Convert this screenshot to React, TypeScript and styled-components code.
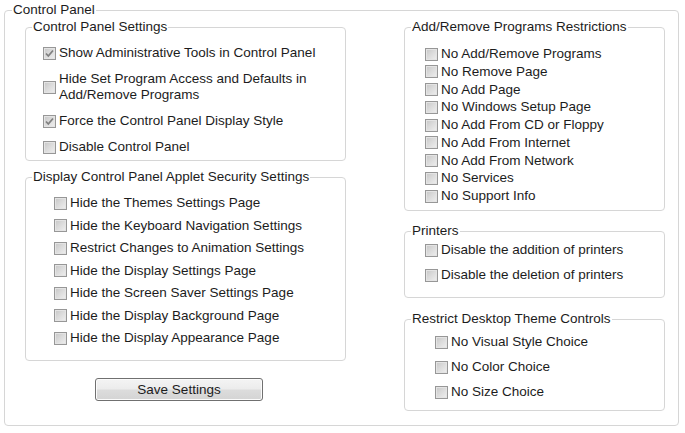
import React from "react";
import styled, { createGlobalStyle } from "styled-components";

const Global = createGlobalStyle`
  html, body { margin: 0; padding: 0; background: #ffffff; }
  body {
    font-family: "Liberation Sans", Arial, sans-serif;
    font-size: 13.5px;
    color: #1c1c1c;
  }
`;

const Outer = styled.fieldset`
  box-sizing: border-box;
  margin: 2px 0 0 4px;
  width: 675px;
  padding: 1px 13px 14px 7px;
  border: 1px solid #d6d6d6;
  border-radius: 4px;
  min-width: 0;
`;

const Legend = styled.legend`
  padding: 0 1px;
  line-height: 16px;
  font-size: 13.5px;
  color: #1c1c1c;
`;

const Columns = styled.div`
  display: flex;
  justify-content: space-between;
  margin-left: 13px;
`;

const Column = styled.div<{ $w: number }>`
  display: flex;
  flex-direction: column;
  width: ${(p) => p.$w}px;
`;

const Group = styled.fieldset<{ $pt: number; $pb: number; $mt?: number }>`
  box-sizing: border-box;
  margin: ${(p) => p.$mt ?? 0}px 0 0 0;
  padding: ${(p) => p.$pt}px 6px ${(p) => p.$pb}px 6px;
  border: 1px solid #d6d6d6;
  border-radius: 4px;
  min-width: 0;
`;

const List = styled.div<{ $indent: number; $gap: number }>`
  display: flex;
  flex-direction: column;
  gap: ${(p) => p.$gap}px;
  padding-left: ${(p) => p.$indent}px;
`;

const Row = styled.label`
  display: flex;
  align-items: center;
  gap: 3px;
  line-height: 16px;
  white-space: nowrap;
  cursor: default;
`;

const Box = styled.span`
  box-sizing: border-box;
  flex: none;
  width: 13px;
  height: 13px;
  border: 1px solid #979797;
  background: linear-gradient(135deg, #c6c6c6 0%, #dadada 45%, #efefef 100%);
  box-shadow: inset 0 0 0 1px #e4e4e4;
  display: flex;
  align-items: center;
  justify-content: center;
`;

const Button = styled.button`
  box-sizing: border-box;
  margin: 17px 0 0 70px;
  width: 168px;
  height: 23px;
  border: 1px solid #707070;
  border-radius: 3px;
  background: linear-gradient(to bottom, #f4f4f4 0%, #ececec 48%, #dcdcdc 52%, #d4d4d4 100%);
  box-shadow: inset 0 0 0 1px #fbfbfb;
  font-family: "Liberation Sans", Arial, sans-serif;
  font-size: 13.5px;
  color: #1c1c1c;
  padding: 0;
`;

const Check = ({ checked, children }: { checked?: boolean; children: React.ReactNode }) => (
  <Row>
    <Box>
      {checked && (
        <svg width="9" height="9" viewBox="0 0 9 9">
          <path d="M1 4.5 L3.3 7 L8 1.5" stroke="#808080" strokeWidth="1.8" fill="none" />
        </svg>
      )}
    </Box>
    <span>{children}</span>
  </Row>
);

export default function App() {
  return (
    <>
      <Global />
      <Outer>
        <Legend>Control Panel</Legend>
        <Columns>
          <Column $w={321}>
            <Group $pt={10} $pb={5}>
              <Legend>Control Panel Settings</Legend>
              <List $indent={11} $gap={10}>
                <Check checked>Show Administrative Tools in Control Panel</Check>
                <Check>
                  Hide Set Program Access and Defaults in
                  <br />
                  Add/Remove Programs
                </Check>
                <Check checked>Force the Control Panel Display Style</Check>
                <Check>Disable Control Panel</Check>
              </List>
            </Group>
            <Group $pt={10} $pb={14} $mt={8}>
              <Legend>Display Control Panel Applet Security Settings</Legend>
              <List $indent={22} $gap={6.5}>
                <Check>Hide the Themes Settings Page</Check>
                <Check>Hide the Keyboard Navigation Settings</Check>
                <Check>Restrict Changes to Animation Settings</Check>
                <Check>Hide the Display Settings Page</Check>
                <Check>Hide the Screen Saver Settings Page</Check>
                <Check>Hide the Display Background Page</Check>
                <Check>Hide the Display Appearance Page</Check>
              </List>
            </Group>
            <Button>Save Settings</Button>
          </Column>
          <Column $w={261}>
            <Group $pt={11} $pb={6}>
              <Legend>Add/Remove Programs Restrictions</Legend>
              <List $indent={14} $gap={1.75}>
                <Check>No Add/Remove Programs</Check>
                <Check>No Remove Page</Check>
                <Check>No Add Page</Check>
                <Check>No Windows Setup Page</Check>
                <Check>No Add From CD or Floppy</Check>
                <Check>No Add From Internet</Check>
                <Check>No Add From Network</Check>
                <Check>No Services</Check>
                <Check>No Support Info</Check>
              </List>
            </Group>
            <Group $pt={3} $pb={14} $mt={12}>
              <Legend>Printers</Legend>
              <List $indent={14} $gap={9}>
                <Check>Disable the addition of printers</Check>
                <Check>Disable the deletion of printers</Check>
              </List>
            </Group>
            <Group $pt={7} $pb={10} $mt={13}>
              <Legend>Restrict Desktop Theme Controls</Legend>
              <List $indent={24} $gap={9}>
                <Check>No Visual Style Choice</Check>
                <Check>No Color Choice</Check>
                <Check>No Size Choice</Check>
              </List>
            </Group>
          </Column>
        </Columns>
      </Outer>
    </>
  );
}
